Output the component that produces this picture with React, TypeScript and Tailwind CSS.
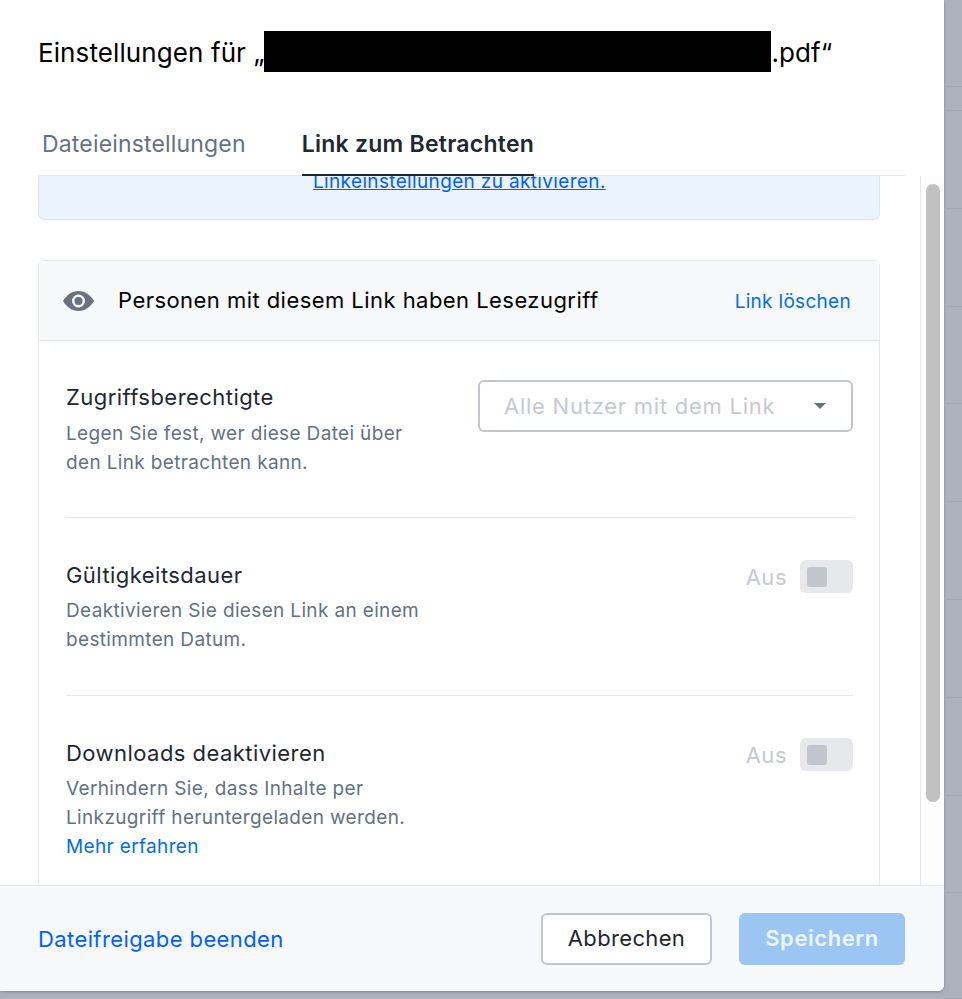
const stripeRows = [87, 24, 98, 98, 97, 98, 98, 98, 98, 97, 106];

function EyeIcon() {
  return (
    <svg width="31" height="20" viewBox="0 0 31 20" className="shrink-0">
      <path d="M0 10C3.5 4 9 0 15.5 0S27.5 4 31 10c-3.5 6-9 10-15.500 10S3.500 16 0 10Z" fill="#6a7280" />
      <circle cx="15.500" cy="10" r="6.500" fill="#f7f8fa" />
      <circle cx="15.500" cy="10" r="4" fill="#6a7280" />
    </svg>
  );
}

function Toggle() {
  return (
    <div className="flex items-center gap-[13px]">
      <span className="text-[22px] leading-[28px] tracking-[0.5px] text-[#c5cad1]">Aus</span>
      <div className="flex h-[33px] w-[53px] items-center rounded-[6px] bg-[#e6e8eb] pl-[7px]">
        <div className="h-[20px] w-[20px] rounded-[3px] bg-[#c1c6cd]" />
      </div>
    </div>
  );
}

function SettingRow({
  title,
  children,
  right,
  className,
  descClass = "mt-[6px]",
}: {
  title: string;
  children: React.ReactNode;
  right: React.ReactNode;
  className: string;
  descClass?: string;
}) {
  return (
    <div className={`flex justify-between ${className}`}>
      <div className="w-[360px]">
        <div className="text-[22px] leading-[30px] tracking-[0.45px] text-[#1e2733]">{title}</div>
        <div className={`${descClass} text-[19px] leading-[29px] tracking-[0.35px] text-[#637282]`}>{children}</div>
      </div>
      {right}
    </div>
  );
}

export default function App() {
  return (
    <div className="flex h-[999px] w-[962px] overflow-hidden bg-[#acb2bc] font-['Inter',sans-serif]">
      <div className="flex h-[991px] w-[944px] shrink-0 flex-col overflow-hidden rounded-br-[6px] bg-white shadow-[0_1px_3px_rgba(0,0,0,0.25)]">
        <div className="h-[176px] shrink-0 pl-[38px] pr-[39px]">
          <div className="flex h-[112px] items-center pb-[7px] text-[26px] tracking-[0.1px] text-[#000000]">
            <span>Einstellungen für „</span>
            <span className="mb-[3px] h-[41px] w-[507px] bg-black" />
            <span>.pdf“</span>
          </div>
          <div className="flex h-[64px] items-end gap-[56px] border-b border-[#e6e8eb] pl-[4px]">
            <div className="h-[54px] text-[23px] leading-[46px] tracking-[0.17px] text-[#637282]">Dateieinstellungen</div>
            <div className="-mb-px h-[55px] border-b-2 border-[#1e2733] text-[23px] font-semibold leading-[46px] tracking-[0.25px] text-[#1e2733]">
              Link zum Betrachten
            </div>
          </div>
        </div>

        <div className="flex min-h-0 flex-1">
          <div className="flex-1 overflow-hidden pl-[38px]">
            <div className="h-[44px] w-[842px] overflow-hidden rounded-b-[6px] border-x border-b border-[#dfe6ef] bg-[#ebf3fd] pl-[274px]">
              <a className="-mt-[5px] block text-[19px] leading-[22px] tracking-[0.35px] text-[#0061fe] underline">
                Linkeinstellungen zu aktivieren.
              </a>
            </div>

            <div className="mt-[40px] w-[842px] rounded-t-[6px] border border-[#e6e8eb]">
              <div className="flex h-[80px] items-center border-b border-[#e6e8eb] bg-[#f7f8fa] pl-[24px] pr-[28px]">
                <EyeIcon />
                <span className="ml-[24px] flex-1 text-[22px] tracking-[0.45px] text-[#000000]">
                  Personen mit diesem Link haben Lesezugriff
                </span>
                <a className="pt-[3px] text-[19px] tracking-[0.3px] text-[#0070e0]">Link löschen</a>
              </div>

              <div className="pl-[27px] pr-[26px]">
                <SettingRow
                  title="Zugriffsberechtigte"
                  className="h-[177px] border-b border-[#e6e8eb] pt-[41px]"
                  descClass="mt-[7px]"
                  right={
                    <div className="-mt-[2px] flex h-[52px] w-[375px] items-center justify-between rounded-[6px] border-2 border-[#c1c6cd] pl-[24px] pr-[25px] text-[22px] tracking-[0.75px] text-[#c5cad1]">
                      <span>Alle Nutzer mit dem Link</span>
                      <span className="h-0 w-0 border-x-[6px] border-t-[6px] border-x-transparent border-t-[#637282]" />
                    </div>
                  }
                >
                  Legen Sie fest, wer diese Datei über den Link betrachten kann.
                </SettingRow>

                <SettingRow
                  title="Gültigkeitsdauer"
                  className="h-[178px] border-b border-[#e6e8eb] pt-[42px]"
                  right={<div className="h-[33px]"><Toggle /></div>}
                >
                  Deaktivieren Sie diesen Link an einem bestimmten Datum.
                </SettingRow>

                <SettingRow
                  title="Downloads deaktivieren"
                  className="h-[190px] pt-[42px]"
                  right={<div className="h-[33px]"><Toggle /></div>}
                >
                  Verhindern Sie, dass Inhalte per Linkzugriff heruntergeladen werden.
                  <a className="block text-[#0070e0]">Mehr erfahren</a>
                </SettingRow>
              </div>
            </div>
          </div>

          <div className="w-[24px] shrink-0 border-l border-[#e6e8eb] bg-[#fdfdfd] pl-[5px] pt-[8px]">
            <div className="h-[618px] w-[14px] rounded-full bg-[#c1c1c1]" />
          </div>
        </div>

        <div className="flex h-[106px] shrink-0 items-center border-t border-[#e6e8eb] bg-[#f7f8fa] pl-[38px] pr-[39px]">
          <a className="flex-1 pt-px text-[22px] tracking-[0.4px] text-[#0061fe]">Dateifreigabe beenden</a>
          <button className="h-[52px] w-[171px] rounded-[6px] border-2 border-[#c1c6cd] bg-white text-[22px] tracking-[0.35px] text-[#1e2733]">
            Abbrechen
          </button>
          <button className="ml-[27px] h-[52px] w-[166px] rounded-[6px] bg-[#9bc6f3] text-[22px] font-semibold tracking-[0.55px] text-[#eef5fd]">
            Speichern
          </button>
        </div>
      </div>

      <div className="flex-1">
        {stripeRows.map((h, i) => (
          <div key={i} style={{ height: h }} className="border-b border-[#a3a9b3]" />
        ))}
      </div>
    </div>
  );
}
